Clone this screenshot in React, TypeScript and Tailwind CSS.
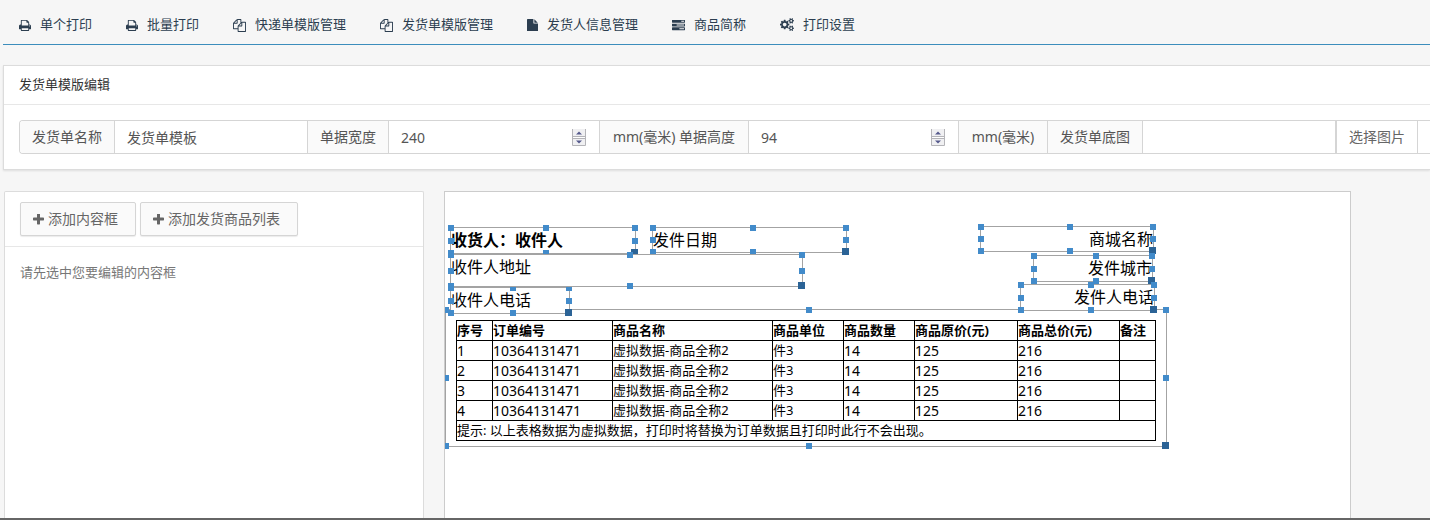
import type { ReactNode } from 'react';

const ICONS = {
  print: {
    box: '64 0 1664 1792',
    size: 'w-3',
    d: 'M448 1536h896v-256h-896v256zm0-640h896v-384h-160q-40 0-68-28t-28-68v-160h-640v640zm1152 64q0-26-19-45t-45-19-45 19-19 45 19 45 45 19 45-19 19-45zm128 0v416q0 13-9.5 22.5t-22.5 9.5h-224v160q0 40-28 68t-68 28h-960q-40 0-68-28t-28-68v-160h-224q-13 0-22.5-9.5t-9.5-22.5v-416q0-79 56.5-135.5t135.5-56.5h64v-544q0-40 28-68t68-28h672q40 0 88 20t76 48l152 152q28 28 48 76t20 88v256h64q79 0 135.5 56.5t56.5 135.5z',
  },
  files: {
    box: '0 0 1792 1792',
    size: 'w-[13px]',
    d: 'M1696 384q40 0 68 28t28 68v1216q0 40-28 68t-68 28h-960q-40 0-68-28t-28-68v-288h-544q-40 0-68-28t-28-68v-672q0-40 20-88t48-76l408-408q28-28 76-48t88-20h416q40 0 68 28t28 68v328q68-40 128-40h416zm-544 213l-299 299h299v-299zm-640-384l-299 299h299v-299zm196 647l316-316v-416h-384v416q0 40-28 68t-68 28h-416v640h512v-256q0-40 20-88t48-76zm956 804v-1152h-384v416q0 40-28 68t-68 28h-416v640h896z',
  },
  file: {
    box: '128 0 1536 1792',
    size: 'w-[11px]',
    d: 'M1152 512v-472q22 14 36 28l408 408q14 14 28 36h-472zm-128 32q0 40 28 68t68 28h544v1056q0 40-28 68t-68 28h-1344q-40 0-68-28t-28-68v-1600q0-40 28-68t68-28h800v544z',
  },
  tasks: {
    box: '0 0 1792 1792',
    size: 'w-[13px]',
    d: 'M1024 1408h640v-128h-640v128zm-384-512h1024v-128h-1024v128zm640-512h384v-128h-384v128zm512 832v256q0 26-19 45t-45 19h-1664q-26 0-45-19t-19-45v-256q0-26 19-45t45-19h1664q26 0 45 19t19 45zm0-512v256q0 26-19 45t-45 19h-1664q-26 0-45-19t-19-45v-256q0-26 19-45t45-19h1664q26 0 45 19t19 45zm0-512v256q0 26-19 45t-45 19h-1664q-26 0-45-19t-19-45v-256q0-26 19-45t45-19h1664q26 0 45 19t19 45z',
  },
  cogs: {
    box: '0 0 1920 1792',
    size: 'w-[14px]',
    d: 'M896 896q0-106-75-181t-181-75-181 75-75 181 75 181 181 75 181-75 75-181zm768 512q0-52-38-90t-90-38-90 38-38 90q0 53 37.5 90.5t90.5 37.5 90.5-37.5 37.5-90.5zm0-1024q0-52-38-90t-90-38-90 38-38 90q0 53 37.5 90.5t90.5 37.5 90.5-37.5 37.5-90.5zm-384 421v185q0 10-7 19.5t-16 10.5l-155 24q-11 35-32 76 34 48 90 115 7 11 7 20 0 12-7 19-23 30-82.5 89.5t-78.5 59.5q-11 0-21-7l-115-90q-37 19-77 31-11 108-23 155-7 24-30 24h-186q-11 0-20-7.5t-10-17.5l-23-153q-34-10-75-31l-118 89q-7 7-20 7-11 0-21-8-144-133-144-160 0-9 7-19 10-14 41-53t47-61q-23-44-35-82l-152-24q-10-1-17-9.5t-7-19.5v-185q0-10 7-19.5t16-10.5l155-24q11-35 32-76-34-48-90-115-7-11-7-20 0-12 7-20 22-30 82-89t79-59q11 0 21 7l115 90q34-18 77-32 11-108 23-154 7-24 30-24h186q11 0 20 7.5t10 17.5l23 153q34 10 75 31l118-89q8-7 20-7 11 0 21 8 144 133 144 160 0 9-8 19-12 16-42 54t-45 60q23 48 34 82l152 23q10 2 17 10.5t7 19.5zm640 533v140q0 16-149 31-12 27-30 52 51 113 51 138 0 4-4 7-122 71-124 71-8 0-46-47t-52-68q-20 2-30 2t-30-2q-14 21-52 68t-46 47q-2 0-124-71-4-3-4-7 0-25 51-138-18-25-30-52-149-15-149-31v-140q0-16 149-31 13-29 30-52-51-113-51-138 0-4 4-7 4-2 35-20t59-34 30-16q8 0 46 46.5t52 67.5q20-2 30-2t30 2q51-71 92-112l6-2q4 0 124 70 4 3 4 7 0 25-51 138 17 23 30 52 149 15 149 31zm0-1024v140q0 16-149 31-12 27-30 52 51 113 51 138 0 4-4 7-122 71-124 71-8 0-46-47t-52-68q-20 2-30 2t-30-2q-14 21-52 68t-46 47q-2 0-124-71-4-3-4-7 0-25 51-138-18-25-30-52-149-15-149-31v-140q0-16 149-31 13-29 30-52-51-113-51-138 0-4 4-7 4-2 35-20t59-34 30-16q8 0 46 46.5t52 67.5q20-2 30-2t30 2q51-71 92-112l6-2q4 0 124 70 4 3 4 7 0 25-51 138 17 23 30 52 149 15 149 31z',
  },
  plus: {
    box: '192 192 1408 1408',
    size: 'w-[11px]',
    d: 'M1600 736v192q0 40-28 68t-68 28h-416v416q0 40-28 68t-68 28h-192q-40 0-68-28t-28-68v-416h-416q-40 0-68-28t-28-68v-192q0-40 28-68t68-28h416v-416q0-40 28-68t68-28h192q40 0 68 28t28 68v416h416q40 0 68 28t28 68z',
  },
};

type IconName = keyof typeof ICONS;

function Icon({ name }: { name: IconName }) {
  const { box, size, d } = ICONS[name];
  return (
    <svg viewBox={box} className={`${size} shrink-0 fill-current`} aria-hidden="true">
      <path d={d} />
    </svg>
  );
}

const NAV: { icon: IconName; label: string }[] = [
  { icon: 'print', label: '单个打印' },
  { icon: 'print', label: '批量打印' },
  { icon: 'files', label: '快递单模版管理' },
  { icon: 'files', label: '发货单模版管理' },
  { icon: 'file', label: '发货人信息管理' },
  { icon: 'tasks', label: '商品简称' },
  { icon: 'cogs', label: '打印设置' },
];

const ADDON =
  'flex shrink-0 items-center justify-center whitespace-nowrap border-r border-[#d5d5d5] bg-[#fafafa]';
const FIELD = 'h-full min-w-0 shrink-0 border-r border-[#d5d5d5] bg-white px-3 outline-none';

function Spinner() {
  return (
    <svg viewBox="0 0 14 17" className="h-[17px] w-[14px]" aria-hidden="true">
      <path d="M1 0h12v7H1zM1 10h12v6H1z" fill="#f0f0f2" />
      <path d="M.5 0v16.500h13V0M0 7.500h14M0 9.500h14" fill="none" stroke="#b4b4b8" />
      <path d="M4 5.500l3-3 3 3zM4 11.500h6l-3 3z" fill="#55598c" />
    </svg>
  );
}

function NumberField({ id, value, width }: { id: string; value: number; width: string }) {
  return (
    <div className={`${width} flex h-full shrink-0 items-center border-r border-[#d5d5d5] bg-white pr-[13px]`}>
      <input
        id={id}
        type="number"
        defaultValue={value}
        className="h-full min-w-0 flex-1 appearance-none bg-transparent pl-3 outline-none [appearance:textfield]"
      />
      <Spinner />
    </div>
  );
}

const HANDLES = [
  '-left-[3px] -top-[3px]',
  'left-1/2 -top-[3px]',
  '-right-[3px] -top-[3px]',
  '-left-[3px] top-1/2 -mt-[3px]',
  '-right-[3px] top-1/2 -mt-[3px]',
  '-left-[3px] -bottom-[3px]',
  'left-1/2 -bottom-[3px]',
];

function DragBox({ place, children }: { place: string; children: ReactNode }) {
  return (
    <div className={`absolute border border-[#a3a3a3] bg-white ${place}`}>
      {children}
      {HANDLES.map((h) => (
        <span key={h} className={`absolute size-[6px] bg-[#428bca] ${h}`} />
      ))}
      <span className="absolute -right-[3px] -bottom-[3px] size-[7px] bg-[#2b6396]" />
    </div>
  );
}

const TEXT_BOXES = [
  { text: '收货人：收件人', place: 'left-[5px] top-[35px] w-[186px] h-[27px] font-bold' },
  { text: '发件日期', place: 'left-[207px] top-[35px] w-[195px] h-[26px]' },
  { text: '收件人电话', place: 'left-[5px] top-[95px] w-[120px] h-[27px]' },
  { text: '收件人地址', place: 'left-[5px] top-[62px] w-[353px] h-[33px]' },
  { text: '商城名称', place: 'left-[535px] top-[34px] w-[174px] h-[26px] text-right' },
  { text: '发件城市', place: 'left-[588px] top-[63px] w-[120px] h-[27px] text-right' },
  { text: '发件人电话', place: 'left-[575px] top-[92px] w-[135px] h-[27px] text-right' },
];

const COLUMNS = [
  { title: '序号', width: 'w-[36px]' },
  { title: '订单编号', width: 'w-[120px]' },
  { title: '商品名称', width: 'w-[160px]' },
  { title: '商品单位', width: 'w-[71px]' },
  { title: '商品数量', width: 'w-[71px]' },
  { title: '商品原价(元)', width: 'w-[103px]' },
  { title: '商品总价(元)', width: 'w-[102px]' },
  { title: '备注', width: 'w-[36px]' },
];

const ROWS = [1, 2, 3, 4].map((n) => [
  String(n), '10364131471', '虚拟数据-商品全称2', '件3', '14', '125', '216', '',
]);

const CELL = 'h-5 border border-black p-0 text-left leading-[19px] whitespace-nowrap';

function GoodsTable() {
  return (
    <table className="ml-[10px] mt-[10px] w-[700px] table-fixed border-collapse text-[13px]">
      <colgroup>
        {COLUMNS.map((c) => (
          <col key={c.title} className={c.width} />
        ))}
      </colgroup>
      <thead>
        <tr>
          {COLUMNS.map((c) => (
            <th key={c.title} className={`${CELL} font-bold`}>{c.title}</th>
          ))}
        </tr>
      </thead>
      <tbody>
        {ROWS.map((row) => (
          <tr key={row[0]}>
            {row.map((v, i) => (
              <td key={i} className={`${CELL} ${/^\d+$/.test(v) ? 'text-sm leading-[19px]' : ''}`}>{v}</td>
            ))}
          </tr>
        ))}
        <tr>
          <td colSpan={8} className={CELL}>
            提示: 以上表格数据为虚拟数据，打印时将替换为订单数据且打印时此行不会出现。
          </td>
        </tr>
      </tbody>
    </table>
  );
}

const BUTTON =
  'flex h-[34px] items-center gap-1 rounded-xs border border-[#d5d5d5] bg-[#fafafa] pl-3 pr-[17px] text-sm text-[#666] shadow-[0_1px_1px_rgba(0,0,0,0.08)]';

export default function App() {
  return (
    <div className="flex h-screen flex-col overflow-hidden bg-[#f6f6f6] font-['Noto_Sans','Noto_Sans_CJK_SC',sans-serif] text-[13px] text-[#333]">
      <nav className="ml-[3px] flex h-[45px] shrink-0 items-center border-b border-[#3c8dbc] pt-[6px] pl-4">
        <ul className="flex gap-[34px]">
          {NAV.map((item) => (
            <li key={item.label}>
              <a href="#" className="flex items-center gap-[9px] whitespace-nowrap text-[#2c3e50]">
                <Icon name={item.icon} />
                {item.label}
              </a>
            </li>
          ))}
        </ul>
      </nav>

      <section className="mt-5 ml-[3px] shrink-0 border border-r-0 border-[#dcdcdc] bg-white shadow-[0_1px_2px_rgba(0,0,0,0.1)]">
        <h1 className="flex h-[39px] items-center border-b border-[#e7e7e7] px-[15px] text-[13px]">发货单模版编辑</h1>
        <form className="py-[15px] pl-[15px]">
          <div className="flex h-[34px] overflow-hidden rounded-l-sm border border-r-0 border-[#d5d5d5] text-sm text-[#555]">
            <label htmlFor="name" className={`${ADDON} w-[95px]`}>发货单名称</label>
            <input id="name" defaultValue="发货单模板" className={`${FIELD} w-[193px]`} />
            <label htmlFor="width" className={`${ADDON} w-[81px]`}>单据宽度</label>
            <NumberField id="width" value={240} width="w-[211px]" />
            <label htmlFor="height" className={`${ADDON} w-[149px]`}>mm(毫米) 单据高度</label>
            <NumberField id="height" value={94} width="w-[210px]" />
            <span className={`${ADDON} w-[89px]`}>mm(毫米)</span>
            <label htmlFor="image" className={`${ADDON} w-[95px]`}>发货单底图</label>
            <input id="image" className={`${FIELD} w-[193px]`} />
            <button type="button" className="w-[82px] shrink-0 border-x border-[#d5d5d5] bg-white text-[#666]">
              选择图片
            </button>
            <input aria-label="图片预览" className="min-w-0 flex-1 bg-white outline-none" />
          </div>
        </form>
      </section>

      <main className="mt-[21px] ml-1 flex min-h-0 flex-1 items-stretch gap-5">
        <aside className="w-[420px] shrink-0 rounded-t-xs border border-b-0 border-[#dcdcdc] bg-white">
          <div className="flex gap-1 border-b border-[#e7e7e7] px-[15px] py-[10px]">
            <button type="button" className={BUTTON}>
              <Icon name="plus" />
              添加内容框
            </button>
            <button type="button" className={BUTTON}>
              <Icon name="plus" />
              添加发货商品列表
            </button>
          </div>
          <p className="p-[15px] leading-5 text-[#777]">请先选中您要编辑的内容框</p>
        </aside>

        <div className="relative w-[907px] shrink-0 overflow-hidden border border-b-0 border-[#ccc] bg-white text-base text-black">
          <DragBox place="left-0 top-[117px] w-[722px] h-[138px]">
            <GoodsTable />
          </DragBox>
          {TEXT_BOXES.map((b) => (
            <DragBox key={b.text} place={b.place}>
              <p className="leading-[25px] whitespace-nowrap">{b.text}</p>
            </DragBox>
          ))}
        </div>
      </main>

      <footer className="h-[2px] shrink-0 bg-[#666]" />
    </div>
  );
}
